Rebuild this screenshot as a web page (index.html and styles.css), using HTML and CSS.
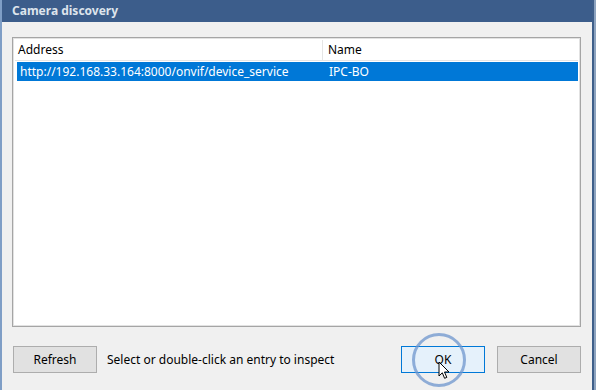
FILE: index.html
```html
<!DOCTYPE html>
<html lang="en">
<head>
  <meta charset="UTF-8">
  <title>Camera discovery</title>
  <link rel="stylesheet" href="styles.css">
</head>
<body>
  <div class="window">
    <div class="titlebar">Camera discovery</div>

    <div class="content">
      <div class="listbox">
        <div class="row header">
          <div class="col addr">Address</div>
          <div class="col name">Name</div>
        </div>
        <div class="row selected">
          <div class="col addr">http://192.168.33.164:8000/onvif/device_service</div>
          <div class="col name">IPC-BO</div>
        </div>
      </div>

      <div class="footer">
        <button type="button" class="btn">Refresh</button>
        <span class="hint">Select or double-click an entry to inspect</span>
        <button type="button" class="btn default">OK</button>
        <button type="button" class="btn">Cancel</button>

        <div class="click-ring"></div>
        <svg class="cursor" width="13" height="19" viewBox="0 0 13 19">
          <path d="M1 1 L1 15 L4.3 11.8 L6.6 17.3 L8.8 16.4 L6.5 11 L11 11 Z" fill="#fff" stroke="#000" stroke-width="1" stroke-linejoin="round"/>
        </svg>
      </div>
    </div>
  </div>
</body>
</html>
```

FILE: styles.css
```css
body {
  margin: 0;
  width: 596px;
  height: 390px;
  overflow: hidden;
  background: #8da3bf;
  font-family: 'Noto Sans', 'Open Sans', sans-serif;
  font-size: 12px;
  color: #000;
}
.window {
  width: 590px;
  height: 390px;
  border-left: 2px solid #7f9ec6;
  border-right: 2px solid #3f5f8a;
  display: flex;
  flex-direction: column;
  background: #f0f0f0;
}
.titlebar {
  height: 22px;
  line-height: 22px;
  background: #3c5d8b;
  color: #dde4ec;
  font-weight: bold;
  padding-left: 10px;
}
.content {
  flex: 1;
  padding: 15px 11px 0 10px;
  display: flex;
  flex-direction: column;
}
.listbox {
  box-sizing: border-box;
  height: 290px;
  background: #fff;
  border: 1px solid #a5a5a5;
  box-shadow: inset 0 0 0 1px #e2e2e2;
  padding: 2px 2px 2px 4px;
}
.row {
  display: flex;
  height: 20px;
  line-height: 20px;
}
.header {
  border-bottom: 1px solid #e5e5e5;
  margin: 0 0 1px -2px;
}
.header .col {
  padding-left: 5px;
}
.header .addr {
  border-right: 1px solid #e5e5e5;
}
.col {
  white-space: nowrap;
  overflow: hidden;
}
.addr {
  width: 304px;
}
.name {
  flex: 1;
  padding-left: 5px;
}
.row .addr {
  padding-left: 3px;
}
.selected {
  background: #0078d7;
  color: #fff;
  height: 19px;
  line-height: 19px;
}
.footer {
  position: relative;
  margin-top: 19px;
  display: flex;
  align-items: center;
  padding-left: 1px;
}
.btn {
  width: 84px;
  height: 27px;
  font-family: inherit;
  font-size: 12px;
  background: #e1e1e1;
  border: 1px solid #adadad;
  color: #000;
  padding: 0;
}
.btn.default {
  background: #e5f1fb;
  border-color: #0078d7;
  margin-left: auto;
}
.btn + .btn {
  margin-left: 12px;
}
.hint {
  margin-left: 10px;
}
.click-ring {
  position: absolute;
  left: 400px;
  top: -13px;
  width: 48px;
  height: 48px;
  border: 3px solid rgba(110, 150, 205, 0.75);
  border-radius: 50%;
}
.cursor {
  position: absolute;
  left: 426px;
  top: 15px;
}
```
